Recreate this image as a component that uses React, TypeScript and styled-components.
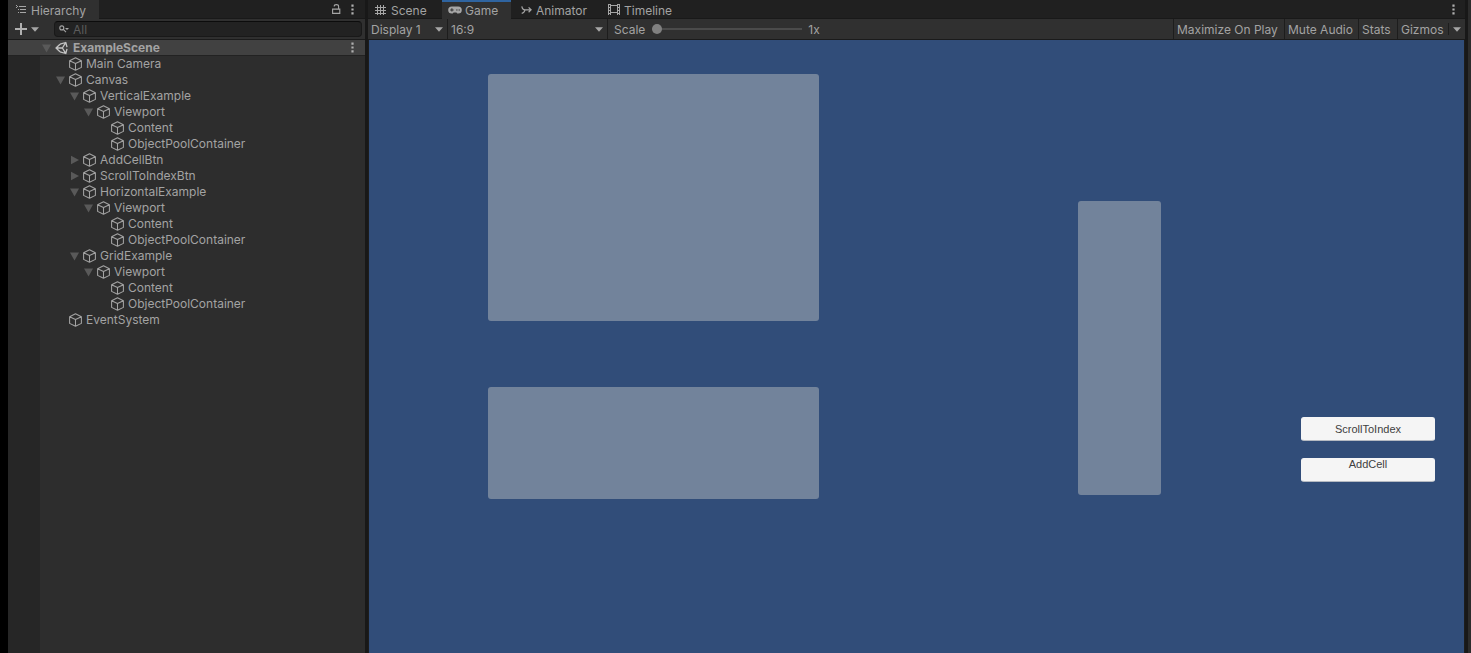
import React from 'react';
import styled, { createGlobalStyle, css } from 'styled-components';

const GlobalStyle = createGlobalStyle`
  *, *::before, *::after { box-sizing: border-box; }
  body { margin: 0; background: #191919; }
  body, button, input, select {
    font-family: Inter, 'Liberation Sans', sans-serif;
    font-size: 12px;
    letter-spacing: normal;
    color: #a3a3a3;
  }
  button { padding: 0; border: 0; background: none; }
  ul { list-style: none; margin: 0; padding: 0; }
  svg { display: block; flex: none; }
`;

const Editor = styled.div`
  display: flex;
  min-height: 100vh;
  gap: 3px;
  padding-left: 8px;
  background: linear-gradient(to right, #000 8px, #181818 8px);
  overflow: hidden;
`;

const HierarchyPanel = styled.section`
  flex: 0 0 357px;
  display: flex;
  flex-direction: column;
  background: #2d2d2d;
`;

const GamePanel = styled.main`
  flex: 1;
  min-width: 0;
  display: flex;
  flex-direction: column;
  background: #1d1d1d;
`;

const NextPanelEdge = styled.div`
  flex: 0 0 3px;
  background: #2c2c2c;
`;

const TabBar = styled.div`
  display: flex;
  height: 19px;
  background: #202020;
`;

const Tab = styled.button<{ $active?: boolean; $accent?: boolean; $width: number; $pad: number; $gap: number }>`
  display: flex;
  align-items: center;
  flex: 0 0 ${p => p.$width}px;
  gap: ${p => p.$gap}px;
  padding: 2px 0 0 ${p => p.$pad}px;
  white-space: nowrap;
  border-bottom: 1px solid ${p => (p.$active ? '#303030' : '#191919')};
  ${p => p.$active && css`background: #303030;`}
  ${p => p.$accent && css`
    border-top: 2px solid #2f64a0;
    padding-top: 0;
  `}
`;

const TabBarEnd = styled.div<{ $gap: number; $right: number }>`
  flex: 1;
  display: flex;
  align-items: center;
  justify-content: flex-end;
  gap: ${p => p.$gap}px;
  padding-right: ${p => p.$right}px;
  border-bottom: 1px solid #191919;
`;

const IconButton = styled.button`
  display: flex;
  align-items: center;
`;

const Toolbar = styled.div`
  display: flex;
  height: 21px;
  background: #303030;
  border-bottom: 1px solid #1b1b1b;
`;

const AddButton = styled.button`
  display: flex;
  align-items: center;
  gap: 4px;
  padding-left: 7px;
  flex: 0 0 46px;
`;

const SearchBox = styled.label`
  display: flex;
  align-items: center;
  flex: 1;
  gap: 4px;
  height: 16px;
  margin: 2px 3px 0 0;
  padding-left: 4px;
  background: #222;
  border: 1px solid #191919;
  border-top-color: #0c0c0c;
  border-radius: 4px;
`;

const SearchInput = styled.input`
  flex: 1;
  min-width: 0;
  padding: 0;
  border: 0;
  outline: 0;
  background: none;
  &::placeholder { color: #5c5c5c; opacity: 1; }
`;

const Tree = styled.ul`
  flex: 1;
  background: linear-gradient(to right, #262626 32px, #2d2d2d 32px);
`;

const TreeRow = styled.li<{ $depth: number; $scene?: boolean }>`
  display: flex;
  align-items: center;
  height: 16px;
  gap: 3px;
  padding-left: ${p => 34 + p.$depth * 14}px;
  white-space: nowrap;
  border-bottom: 1px solid transparent;
  ${p => p.$scene && css`
    font-weight: 700;
    background: #414141;
    border-bottom-color: #222;
  `}
`;

const Disclosure = styled.button`
  display: flex;
  align-items: center;
  flex: 0 0 10px;
  height: 15px;
`;

const NoDisclosure = styled.span`
  flex: 0 0 10px;
`;

const RowMenu = styled(IconButton)`
  margin-left: auto;
  padding-right: 11px;
`;

const SelectBox = styled.label<{ $width: number }>`
  display: flex;
  align-items: center;
  flex: 0 0 ${p => p.$width}px;
  padding: 0 4px 0 3px;
  border-right: 1px solid #1d1d1d;
`;

const SelectInput = styled.select`
  appearance: none;
  flex: 1;
  min-width: 0;
  padding: 0;
  border: 0;
  outline: 0;
  background: none;
`;

const ScaleField = styled.label`
  display: flex;
  align-items: center;
  gap: 6px;
  padding-left: 6px;
  flex: 1;
`;

const ScaleSlider = styled.input`
  appearance: none;
  width: 150px;
  height: 10px;
  margin: 0 0 0 1px;
  background: linear-gradient(#4b4b4b, #4b4b4b) center / 100% 2px no-repeat;
  &::-webkit-slider-thumb {
    appearance: none;
    width: 10px;
    height: 10px;
    border-radius: 50%;
    background: #808080;
  }
`;

const ToolButton = styled.button<{ $width: number }>`
  flex: 0 0 ${p => p.$width}px;
  padding-left: 3px;
  border-left: 1px solid #1d1d1d;
  text-align: left;
  white-space: nowrap;
`;

const GizmosMenu = styled.button`
  display: flex;
  align-items: center;
  justify-content: center;
  flex: 0 0 17px;
  align-self: center;
  height: 12px;
  border-left: 1px solid #1d1d1d;
`;

const Viewport = styled.div`
  flex: 1;
  display: grid;
  grid-template-columns: 119fr 331fr 259fr 83fr 140fr 134fr 29fr;
  align-items: start;
  margin: 0 1px;
  background: #314d79;
`;

const ViewColumn = styled.div<{ $col: number; $top: number; $gap?: number }>`
  grid-column: ${p => p.$col};
  grid-row: 1;
  display: flex;
  flex-direction: column;
  gap: ${p => p.$gap ?? 0}px;
  padding-top: ${p => p.$top}px;
`;

const ScrollArea = styled.div<{ $height: number }>`
  height: ${p => p.$height}px;
  border-radius: 3px;
  background: #72839b;
`;

const GameButton = styled.button<{ $top?: boolean }>`
  display: flex;
  justify-content: center;
  align-items: ${p => (p.$top ? 'flex-start' : 'center')};
  height: 24px;
  border-radius: 3px;
  border: 1px solid #f5f5f5;
  border-bottom-color: #b5bac2;
  background: #f5f5f5;
  color: #404040;
  font-family: 'Liberation Sans', Arial, sans-serif;
  font-size: 11px;
  line-height: 10px;
`;

const Caret = () => (
  <svg width="8" height="5" viewBox="0 0 8 5"><path d="M0 0.3h8L4 4.8z" fill="#a6a6a6" /></svg>
);

const Fold = ({ open }: { open: boolean }) => (
  <svg width="10" height="10" viewBox="0 0 10 10">
    <path d={open ? 'M0 1.5h9L4.5 9.5z' : 'M1 0.8v8.4L9 5z'} fill="#595959" />
  </svg>
);

const Cube = () => (
  <svg width="14" height="14" viewBox="0 0 14 14" fill="none" stroke="#a3a3a3" strokeWidth="1.05" strokeLinejoin="round">
    <path d="M6.5 0.8 12.4 3.7V10.4L6.5 13.3 0.6 10.4V3.7zM0.6 3.7 6.5 6.5l5.9-2.8M6.5 6.5v6.8" />
  </svg>
);

const UnityLogo = () => (
  <svg width="15" height="14" viewBox="0 0 15 14" fill="none" stroke="#c4c4c4" strokeWidth="1.3" strokeLinejoin="round">
    <path d="M5 3.2 10.8 1.5 12 6.2M12 7.8 10.8 12.5 5 10.8M5 3.2 1 7l4 3.8M1.4 7H7.4M7.4 7l3.3-5.3M7.4 7l3.3 5.3" />
  </svg>
);

const Dots = () => (
  <svg width="3" height="11" viewBox="0 0 3 11" fill="#b0b0b0">
    <path d="M0.4 0.5h2.2v2.2H0.4zM0.4 4.4h2.2v2.2H0.4zM0.4 8.3h2.2v2.2H0.4z" />
  </svg>
);

const ListIcon = () => (
  <svg width="11" height="10" viewBox="0 0 11 10" fill="#a6a6a6">
    <path d="M0 0h1v1H0zM1 1h1v1H1zM0 2h1v1H0zM3 1h7v1H3zM2 4h1v1H2zM4 4h6v1H4zM2 7h1v1H2zM4 7h6v1H4z" />
  </svg>
);

const LockIcon = () => (
  <svg width="9" height="11" viewBox="0 0 9 11" fill="none" stroke="#a6a6a6" strokeWidth="1.1">
    <path d="M0.6 5.1h7.2v4.3H0.6zM6.6 5V2.4Q6.6 0.6 4.4 0.6T2.2 2.4" />
  </svg>
);

const PlusIcon = () => (
  <svg width="12" height="12" viewBox="0 0 12 12" fill="#b0b0b0"><path d="M5 0h2v5h5v2H7v5H5V7H0V5h5z" /></svg>
);

const SearchIcon = () => (
  <svg width="10" height="8" viewBox="0 0 10 8" fill="none" stroke="#a6a6a6" strokeWidth="1.1">
    <circle cx="2.8" cy="2.9" r="2" />
    <path d="M4.3 4.4 7 7.2" />
    <path d="M6 3h4L8 5z" fill="#a6a6a6" stroke="none" />
  </svg>
);

const GridIcon = () => (
  <svg width="11" height="11" viewBox="0 0 11 11" fill="#a6a6a6">
    <path d="M2 0h1v10H2zM5 0h1v10H5zM8 0h1v10H8zM0 2h11v1H0zM0 5h11v1H0zM0 8h11v1H0z" />
  </svg>
);

const GamepadIcon = () => (
  <svg width="14" height="8" viewBox="0 0 14 8">
    <path d="M3.8 0.4h6.4a3.5 3.5 0 0 1 0 7.2Q9.2 7.6 8.4 6.4H5.6Q4.8 7.6 3.8 7.6a3.5 3.5 0 0 1 0-7.2z" fill="#a6a6a6" />
    <path d="M3.4 2.2h1v1.2h1.2v1H4.4v1.2h-1V4.4H2.2v-1h1.2zM8.2 3.4h1.3v1.2H8.2zM10.6 3.4h1.3v1.2h-1.3z" fill="#303030" />
  </svg>
);

const AnimatorIcon = () => (
  <svg width="11" height="9" viewBox="0 0 11 9" fill="none" stroke="#a6a6a6" strokeWidth="1.2">
    <path d="M0.8 0.3Q1.4 3.8 4 3.8H10M0.7 7.4Q3.2 7 4 3.8M7.6 1.4l2.5 2.4-2.5 2.4" />
  </svg>
);

const TimelineIcon = () => (
  <svg width="12" height="12" viewBox="0 0 12 12" fill="none" stroke="#a6a6a6">
    <path d="M0.5 0V11M2.5 0V11M9.5 0V11M11.5 0V11M3 1.5H9M3 8.5H9" />
    <path d="M0.5 0.5h2M0.5 3.5h2M0.5 6.5h2M0.5 9.5h2M9.5 0.5h2M9.5 3.5h2M9.5 6.5h2M9.5 9.5h2" />
  </svg>
);

type Item = { name: string; depth: number; open?: boolean };

const items: Item[] = [
  { name: 'Main Camera', depth: 1 },
  { name: 'Canvas', depth: 1, open: true },
  { name: 'VerticalExample', depth: 2, open: true },
  { name: 'Viewport', depth: 3, open: true },
  { name: 'Content', depth: 4 },
  { name: 'ObjectPoolContainer', depth: 4 },
  { name: 'AddCellBtn', depth: 2, open: false },
  { name: 'ScrollToIndexBtn', depth: 2, open: false },
  { name: 'HorizontalExample', depth: 2, open: true },
  { name: 'Viewport', depth: 3, open: true },
  { name: 'Content', depth: 4 },
  { name: 'ObjectPoolContainer', depth: 4 },
  { name: 'GridExample', depth: 2, open: true },
  { name: 'Viewport', depth: 3, open: true },
  { name: 'Content', depth: 4 },
  { name: 'ObjectPoolContainer', depth: 4 },
  { name: 'EventSystem', depth: 1 },
];

export default function App() {
  return (
    <>
      <GlobalStyle />
      <Editor>
        <HierarchyPanel>
          <TabBar>
            <Tab $active $width={91} $pad={8} $gap={4}><ListIcon />Hierarchy</Tab>
            <TabBarEnd $gap={10} $right={11}>
              <IconButton aria-label="Lock"><LockIcon /></IconButton>
              <IconButton aria-label="Hierarchy menu"><Dots /></IconButton>
            </TabBarEnd>
          </TabBar>
          <Toolbar>
            <AddButton aria-label="Create"><PlusIcon /><Caret /></AddButton>
            <SearchBox>
              <SearchIcon />
              <SearchInput type="text" placeholder="All" aria-label="Search" />
            </SearchBox>
          </Toolbar>
          <Tree>
            <TreeRow $depth={0} $scene>
              <Disclosure aria-label="Collapse ExampleScene"><Fold open /></Disclosure>
              <UnityLogo />
              ExampleScene
              <RowMenu aria-label="Scene menu"><Dots /></RowMenu>
            </TreeRow>
            {items.map((item, i) => (
              <TreeRow key={i} $depth={item.depth}>
                {item.open === undefined
                  ? <NoDisclosure />
                  : <Disclosure aria-label={`Toggle ${item.name}`}><Fold open={item.open} /></Disclosure>}
                <Cube />
                {item.name}
              </TreeRow>
            ))}
          </Tree>
        </HierarchyPanel>

        <GamePanel>
          <TabBar>
            <Tab $width={74} $pad={7} $gap={5}><GridIcon />Scene</Tab>
            <Tab $active $accent $width={69} $pad={6} $gap={3}><GamepadIcon />Game</Tab>
            <Tab $width={90} $pad={10} $gap={4}><AnimatorIcon />Animator</Tab>
            <Tab $width={80} $pad={7} $gap={4}><TimelineIcon />Timeline</Tab>
            <TabBarEnd $gap={0} $right={10}>
              <IconButton aria-label="Game menu"><Dots /></IconButton>
            </TabBarEnd>
          </TabBar>
          <Toolbar>
            <SelectBox $width={80}>
              <SelectInput aria-label="Display"><option>Display 1</option></SelectInput>
              <Caret />
            </SelectBox>
            <SelectBox $width={160}>
              <SelectInput aria-label="Aspect ratio"><option>16:9</option></SelectInput>
              <Caret />
            </SelectBox>
            <ScaleField>
              Scale
              <ScaleSlider type="range" min="1" max="5" defaultValue="1" />
              <span>1x</span>
            </ScaleField>
            <ToolButton $width={111}>Maximize On Play</ToolButton>
            <ToolButton $width={74}>Mute Audio</ToolButton>
            <ToolButton $width={39}>Stats</ToolButton>
            <ToolButton $width={51}>Gizmos</ToolButton>
            <GizmosMenu aria-label="Gizmos menu"><Caret /></GizmosMenu>
          </Toolbar>
          <Viewport>
            <ViewColumn $col={2} $top={34} $gap={66}>
              <ScrollArea $height={247} />
              <ScrollArea $height={112} />
            </ViewColumn>
            <ViewColumn $col={4} $top={161}>
              <ScrollArea $height={294} />
            </ViewColumn>
            <ViewColumn $col={6} $top={377} $gap={17}>
              <GameButton>ScrollToIndex</GameButton>
              <GameButton $top>AddCell</GameButton>
            </ViewColumn>
          </Viewport>
        </GamePanel>
        <NextPanelEdge />
      </Editor>
    </>
  );
}
